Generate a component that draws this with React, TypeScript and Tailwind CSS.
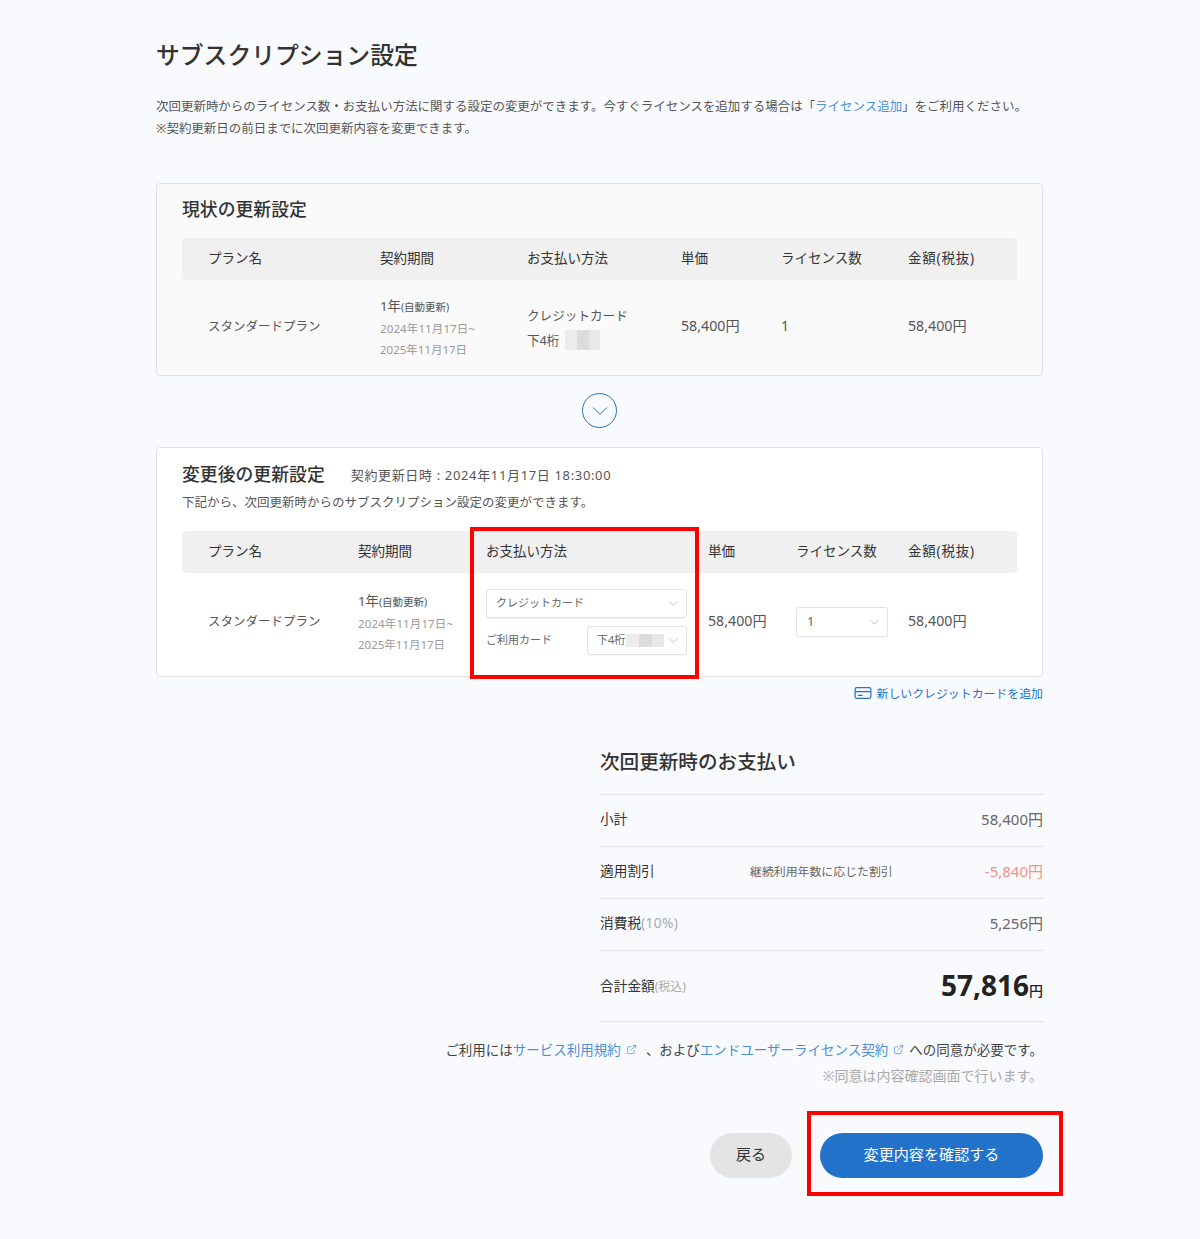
import React from 'react';
import { ChevronDown, ExternalLink } from 'lucide-react';

const MaskedDigits = ({ className }: { className: string }) => (
  <span className={`inline-flex ${className}`}>
    <span className="flex-1 bg-[#ececec]" />
    <span className="flex-1 bg-[#dcdcdc]" />
    <span className="flex-1 bg-[#e8e8e8]" />
  </span>
);

const Period = () => (
  <div className="pt-[1px]">
    <p className="text-[13.3px] leading-[20px] text-[#555]">
      1年<span className="text-[10.5px]">(自動更新)</span>
    </p>
    <p className="mt-[1px] text-[11.5px] leading-[21px] tracking-[0.01em] text-[#999]">2024年11月17日~</p>
    <p className="text-[11.5px] leading-[21px] text-[#999]">2025年11月17日</p>
  </div>
);

const Select = ({ className, children }: { className: string; children: React.ReactNode }) => (
  <div className={`flex items-center justify-between rounded-[3px] border border-[#e3e3e3] bg-white shadow-[0_1px_1px_rgba(0,0,0,0.04)] ${className}`}>
    {children}
    <ChevronDown size={15} strokeWidth={1.1} className="shrink-0 text-[#aaa]" />
  </div>
);

const SummaryRow = ({ label, note, center, value, valueClass }: {
  label: string;
  note?: string;
  center?: string;
  value: string;
  valueClass?: string;
}) => (
  <div className="grid h-[52px] grid-cols-[150px_1fr_auto] items-center border-b border-dotted border-[#d4d4d4] pb-[2px]">
    <p className="text-[13.7px] text-[#333]">
      {label}
      {note && <span className="tracking-[0.03em] text-[#aaa]">{note}</span>}
    </p>
    <p className="text-[11.9px] text-[#666]">{center}</p>
    <p className={`text-[15px] ${valueClass ?? 'text-[#666]'}`}>{value}</p>
  </div>
);

export default function App() {
  return (
    <div className="relative h-[1239px] bg-[#f9fafe] font-['Noto_Sans','Noto_Sans_CJK_JP',sans-serif] text-[#333]">
      <div className="ml-[156px] w-[887px] pt-[38px]">
        <h1 className="text-[23.8px] leading-[34px] font-medium text-[#333]">サブスクリプション設定</h1>
        <p className="mt-[24px] text-[12.47px] leading-[22px] text-[#555]">
          次回更新時からのライセンス数・お支払い方法に関する設定の変更ができます。今すぐライセンスを追加する場合は「<span className="text-[#4a90d9]">ライセンス追加</span>」をご利用ください。
          <br />
          ※契約更新日の前日までに次回更新内容を変更できます。
        </p>

        <section className="mt-[43px] h-[193px] rounded-[4px] border border-[#e2e2e2] bg-[#fafafa] px-[25px] pt-[13px]">
          <h2 className="text-[17.85px] leading-[24px] font-medium text-[#333]">現状の更新設定</h2>
          <div className="mt-[17px] grid h-[42px] grid-cols-[198px_147px_154px_100px_127px_109px] items-center rounded-[4px] bg-[#f0f0f0] pb-[1px] text-[13.5px] text-[#333]">
            <span className="pl-[26px]">プラン名</span>
            <span>契約期間</span>
            <span>お支払い方法</span>
            <span>単価</span>
            <span>ライセンス数</span>
            <span className="tracking-[0.06em]">金額(税抜)</span>
          </div>
          <div className="grid h-[94px] grid-cols-[198px_147px_154px_100px_127px_109px] items-center text-[14.2px] text-[#555]">
            <span className="pt-[1px] pl-[26px] text-[12.5px]">スタンダードプラン</span>
            <Period />
            <div className="pt-[1px] text-[12.6px] leading-[25px]">
              <p>クレジットカード</p>
              <p className="flex items-center gap-[6px]">下4桁<MaskedDigits className="h-[20px] w-[35px]" /></p>
            </div>
            <span className="pb-[2px]">58,400円</span>
            <span className="pb-[2px]">1</span>
            <span className="pb-[2px]">58,400円</span>
          </div>
        </section>

        <div className="flex h-[71px] items-center justify-center pb-[2px]">
          <div className="flex h-[35px] w-[35px] items-center justify-center rounded-full border border-[#2272c9] text-[#2272c9]">
            <ChevronDown size={26} strokeWidth={0.9} />
          </div>
        </div>

        <section className="h-[230px] rounded-[4px] border border-[#e2e2e2] bg-white px-[25px] pt-[13px]">
          <div className="flex items-baseline gap-[26px]">
            <h2 className="text-[17.85px] leading-[26px] font-medium text-[#333]">変更後の更新設定</h2>
            <p className="-translate-y-px text-[13px] tracking-[0.05em] text-[#555]">契約更新日時 : 2024年11月17日 18:30:00</p>
          </div>
          <p className="mt-[4px] text-[12.5px] leading-[24px] text-[#555]">下記から、次回更新時からのサブスクリプション設定の変更ができます。</p>
          <div className="mt-[16px] grid h-[42px] grid-cols-[176px_128px_222px_88px_112px_109px] items-center rounded-[4px] bg-[#f0f0f0] pb-[1px] text-[13.5px] text-[#333]">
            <span className="pl-[26px]">プラン名</span>
            <span>契約期間</span>
            <span>お支払い方法</span>
            <span>単価</span>
            <span>ライセンス数</span>
            <span className="tracking-[0.06em]">金額(税抜)</span>
          </div>
          <div className="grid h-[98px] grid-cols-[176px_128px_222px_88px_112px_109px] items-center text-[14.2px] text-[#555]">
            <span className="pt-[1px] pl-[26px] text-[12.5px]">スタンダードプラン</span>
            <Period />
            <div className="w-[201px]">
              <Select className="h-[29px] pr-[5px] pl-[9px] text-[11px] text-[#666]">
                <span>クレジットカード</span>
              </Select>
              <div className="mt-[8px] flex items-center justify-between">
                <span className="text-[11px] text-[#666]">ご利用カード</span>
                <Select className="h-[29px] w-[100px] pr-[5px] pl-[9px] text-[11px] text-[#666]">
                  <span className="flex items-center gap-[1px]">下4桁<MaskedDigits className="h-[13px] w-[38px]" /></span>
                </Select>
              </div>
            </div>
            <span className="pb-[2px]">58,400円</span>
            <Select className="h-[30px] w-[92px] pr-[5px] pl-[10px] text-[13px] text-[#666]">
              <span>1</span>
            </Select>
            <span className="pb-[2px]">58,400円</span>
          </div>
        </section>

        <div className="mt-[7px] flex items-center justify-end gap-[5px] text-[11.9px] leading-[18px] text-[#2272c9]">
          <svg width="18" height="14" viewBox="0 0 18 14" fill="none" stroke="currentColor" strokeWidth="1.2">
            <rect x="1.1" y="1.6" width="15.8" height="10.8" rx="1.8" />
            <path d="M1.1 5.6h15.8M4 9.3h4.5" />
          </svg>
          <span>新しいクレジットカードを追加</span>
        </div>

        <div className="mt-[46px] ml-auto w-[443px]">
          <h2 className="text-[19.6px] leading-[28px] font-medium text-[#333]">次回更新時のお支払い</h2>
          <div className="mt-[18px] border-t border-dotted border-[#d4d4d4]">
            <SummaryRow label="小計" value="58,400円" />
            <SummaryRow label="適用割引" center="継続利用年数に応じた割引" value="-5,840円" valueClass="text-[#fa8f83]" />
            <SummaryRow label="消費税" note="(10%)" value="5,256円" />
            <div className="flex h-[71px] items-center justify-between border-b border-dotted border-[#d4d4d4]">
              <p className="text-[13.7px] text-[#333]">
                合計金額<span className="text-[12px] text-[#aaa]">(税込)</span>
              </p>
              <p className="pb-[3px] text-[28px] font-bold text-[#222]">
                57,816<span className="text-[14px] font-medium">円</span>
              </p>
            </div>
          </div>
        </div>

        <div className="mt-[18px] text-right text-[13.5px] leading-[20px] text-[#444]">
          <p>
            ご利用には<span className="text-[#4a90d9]">サービス利用規約</span>
            <ExternalLink size={11} strokeWidth={1.6} className="mr-[9px] ml-[5px] inline align-baseline text-[#4a90d9]" />
            、および<span className="text-[#4a90d9]">エンドユーザーライセンス契約</span>
            <ExternalLink size={11} strokeWidth={1.6} className="mx-[5px] inline align-baseline text-[#4a90d9]" />
            への同意が必要です。
          </p>
          <p className="mt-[6px] text-[14px] text-[#aaa]">※同意は内容確認画面で行います。</p>
        </div>

        <div className="mt-[47px] flex justify-end gap-[28px]">
          <button className="h-[45px] w-[82px] rounded-full bg-[#e4e4e4] pb-[2px] text-[15px] text-[#333]">戻る</button>
          <button className="h-[45px] w-[223px] rounded-full bg-[#2272c9] pb-[2px] text-[15.1px] text-white">変更内容を確認する</button>
        </div>
      </div>

      <div className="absolute top-[527px] left-[470px] h-[152px] w-[229px] border-4 border-[#f00]" />
      <div className="absolute top-[1111px] left-[807px] h-[85px] w-[256px] border-4 border-[#f00]" />
    </div>
  );
}
